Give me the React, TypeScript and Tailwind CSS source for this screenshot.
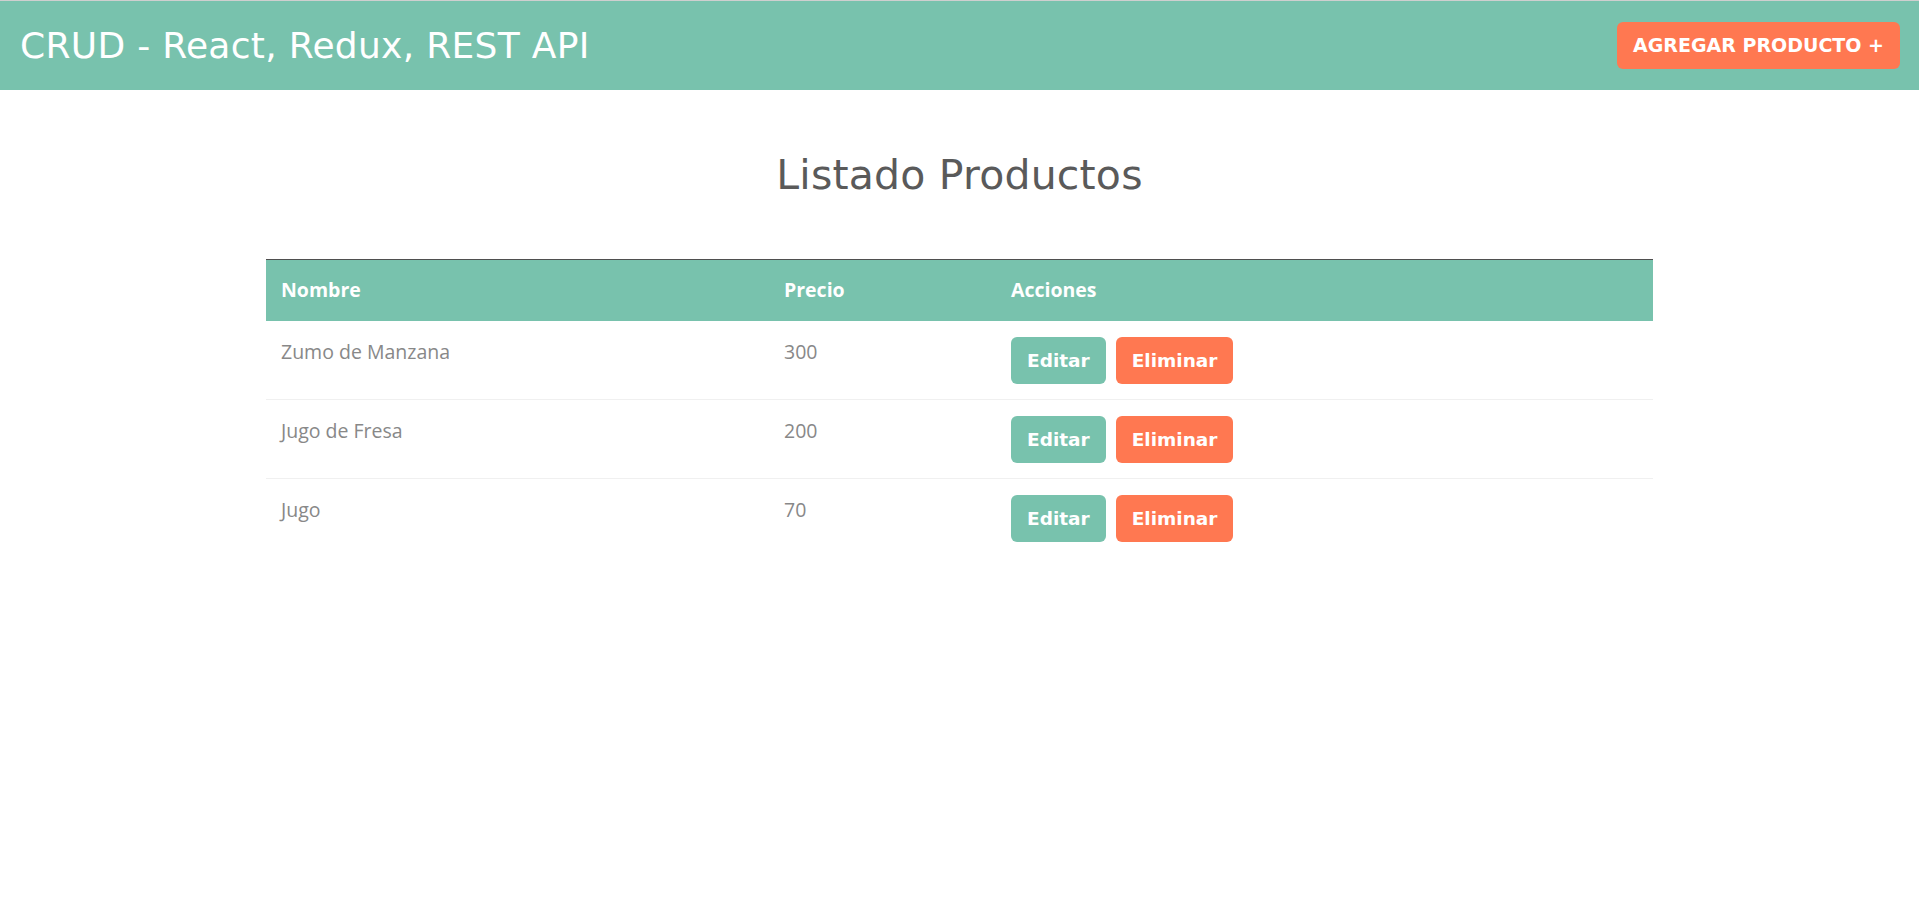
import React from 'react';

interface Producto {
  id: number;
  nombre: string;
  precio: number;
}

const productos: Producto[] = [
  { id: 1, nombre: 'Zumo de Manzana', precio: 300 },
  { id: 2, nombre: 'Jugo de Fresa', precio: 200 },
  { id: 3, nombre: 'Jugo', precio: 70 },
];

const headingFont = "font-['DejaVu_Sans',sans-serif]";
const bodyFont = "font-['Open_Sans',sans-serif]";

export default function App() {
  return (
    <div className={`min-h-screen bg-white ${bodyFont}`}>
      {/* Navbar */}
      <header className="border-t border-[#cfcfcf] bg-[#78c2ad]">
        <nav className="flex h-[89px] items-center justify-between pl-[20px] pr-[19px]">
          <h1 className={`${headingFont} text-[36px] font-normal tracking-[0.3px] text-white`}>
            CRUD - React, Redux, REST API
          </h1>
          <button
            type="button"
            className={`${headingFont} h-[47px] rounded-[6px] bg-[#ff7851] px-[16px] text-[19px] font-bold uppercase text-white`}
          >
            Agregar Producto +
          </button>
        </nav>
      </header>

      {/* Listado */}
      <main className="mx-auto w-[1387px]">
        <h2
          className={`${headingFont} mt-[61px] text-center text-[41px] font-normal leading-[1.2] tracking-[0.2px] text-[#5a5a5a]`}
        >
          Listado Productos
        </h2>

        <table className="mt-[59px] w-full table-fixed border-collapse text-[19.5px] leading-[30px]">
          <thead>
            <tr className="border-t border-[#4f4f4f] bg-[#78c2ad] text-left text-white">
              <th className="w-[503px] px-[15px] pb-[16px] pt-[15px] font-bold">Nombre</th>
              <th className="w-[227px] px-[15px] pb-[16px] pt-[15px] font-bold">Precio</th>
              <th className="px-[15px] pb-[16px] pt-[15px] font-bold">Acciones</th>
            </tr>
          </thead>
          <tbody>
            {productos.map((producto, i) => (
              <tr key={producto.id} className={i > 0 ? 'border-t border-[#f0f0f0]' : ''}>
                <td className="px-[15px] pb-[15px] pt-[16px] align-top text-[#888888]">{producto.nombre}</td>
                <td className="px-[15px] pb-[15px] pt-[16px] align-top text-[#888888]">{producto.precio}</td>
                <td className="px-[15px] pb-[15px] pt-[16px] align-top">
                  <div className="flex gap-[10px]">
                    <button
                      type="button"
                      className={`${headingFont} h-[47px] rounded-[6px] bg-[#78c2ad] px-[16px] text-[18.5px] font-bold text-white`}
                    >
                      Editar
                    </button>
                    <button
                      type="button"
                      className={`${headingFont} h-[47px] rounded-[6px] bg-[#ff7851] px-[16px] text-[18.5px] font-bold text-white`}
                    >
                      Eliminar
                    </button>
                  </div>
                </td>
              </tr>
            ))}
          </tbody>
        </table>
      </main>
    </div>
  );
}
